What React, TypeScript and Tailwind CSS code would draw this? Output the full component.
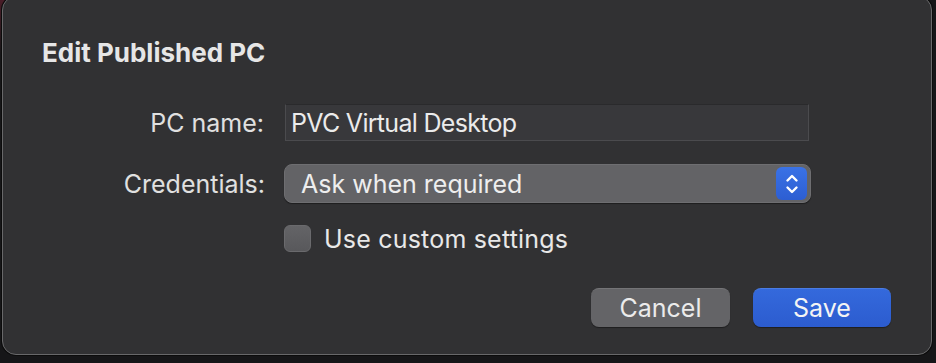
import React from 'react';

const font = { fontFamily: 'Inter, "Noto Sans", sans-serif' };

const App: React.FC = () => {
  return (
    <div className="w-[936px] h-[363px] bg-[linear-gradient(165deg,#4a1d28_0%,#161618_9%)] overflow-hidden" style={font}>
      <div className="w-[930px] h-[359px] ml-[2px] mt-[-4px] rounded-[14px] border border-[#68686a] bg-[#313133] shadow-[0_0_0_1px_#0c0c0c] flex flex-col pt-[42px]">
        <h1 className="pl-[39px] text-[26px] leading-[28px] font-bold text-[#e6e6e6]">
          Edit Published PC
        </h1>

        {/* PC name */}
        <div className="flex items-center mt-[37px]">
          <label className="w-[261px] text-right text-[25px] leading-[28px] text-[#e0e0e0]">PC name:</label>
          <div className="ml-[21px] w-[524px] h-[37px] bg-[#38383b] border border-[#4b4b4e] border-t-[#2a2a2c] flex items-center pl-[5px] text-[25px] leading-[28px] text-[#ebebeb] tracking-[-0.7px]">
            PVC Virtual Desktop
          </div>
        </div>

        {/* Credentials */}
        <div className="flex items-center mt-[23px]">
          <label className="w-[262px] text-right text-[25px] leading-[28px] text-[#e0e0e0]">Credentials:</label>
          <div className="ml-[19px] w-[527px] h-[39px] rounded-[8px] bg-[#636366] border border-[#6e6e71] shadow-[0_1px_1px_rgba(0,0,0,0.4)] flex items-center justify-between pl-[16px] pr-[3px]">
            <span className="text-[25px] leading-[28px] text-[#eeeeee]">Ask when required</span>
            <div className="w-[31px] h-[33px] rounded-[6px] bg-gradient-to-b from-[#3a72e6] to-[#2d5ed2] flex items-center justify-center">
              <svg width="16" height="24" viewBox="0 0 16 24" fill="none" stroke="#ffffff" strokeWidth="2.4" strokeLinecap="round" strokeLinejoin="round">
                <path d="M3.5 8.5 L8 4 L12.5 8.5" />
                <path d="M3.5 15.5 L8 20 L12.5 15.5" />
              </svg>
            </div>
          </div>
        </div>

        {/* Custom settings */}
        <div className="flex items-center h-[27px] mt-[22px] ml-[281px]">
          <div className="w-[27px] h-[27px] rounded-[6px] bg-gradient-to-b from-[#646467] to-[#58585b] border border-[#6a6a6d]" />
          <span className="ml-[13px] text-[25px] leading-[28px] text-[#e8e8e8] tracking-[0.2px]">Use custom settings</span>
        </div>

        {/* Buttons */}
        <div className="flex justify-end gap-[23px] mt-[36px] pr-[40px]">
          <button className="w-[139px] h-[39px] rounded-[8px] bg-[#646467] border-t border-[#747477] shadow-[0_1px_1px_rgba(0,0,0,0.4)] text-[25px] leading-[28px] text-[#ebebeb]">
            Cancel
          </button>
          <button className="w-[138px] h-[39px] rounded-[8px] bg-gradient-to-b from-[#3469dc] to-[#2c5ccf] border-t border-[#4a7ce4] shadow-[0_1px_1px_rgba(0,0,0,0.4)] text-[25px] leading-[28px] text-[#f4f4f4]">
            Save
          </button>
        </div>
      </div>
    </div>
  );
};

export default App;
